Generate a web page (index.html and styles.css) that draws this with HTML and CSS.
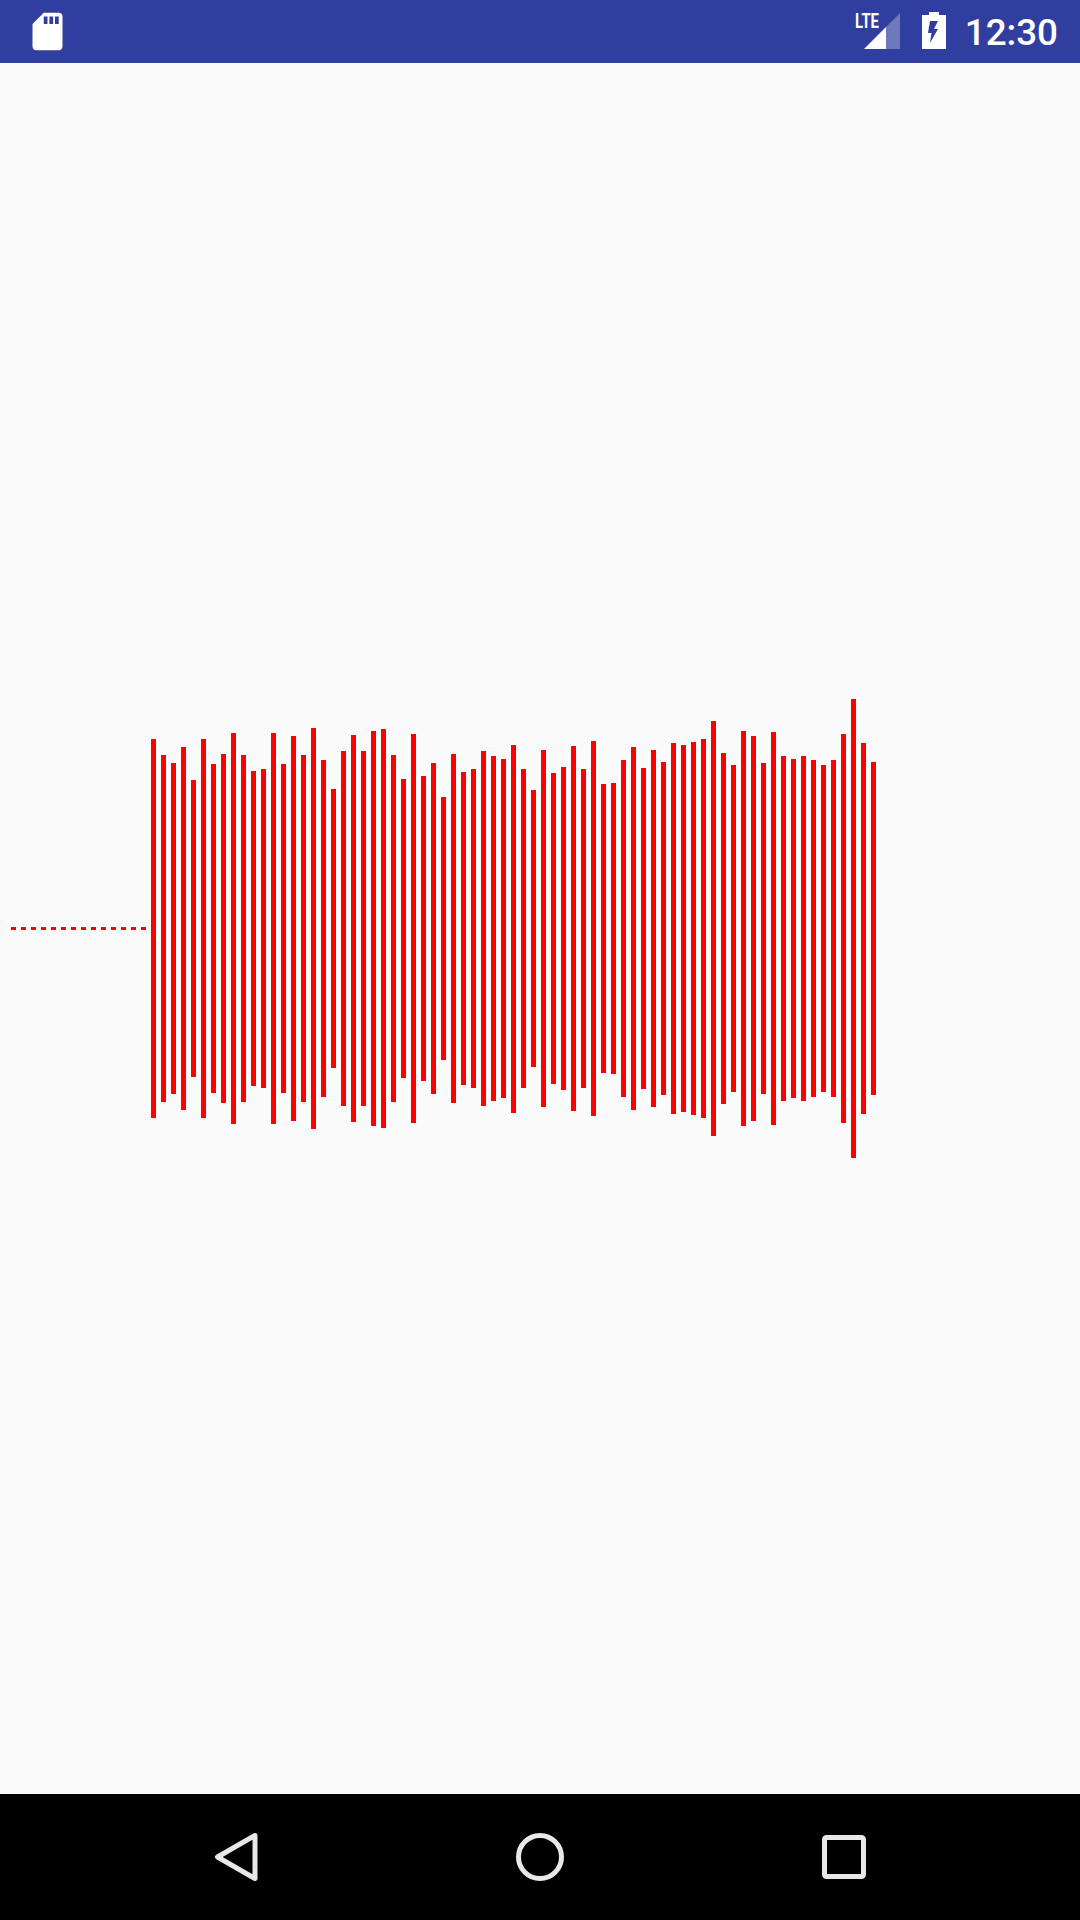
FILE: index.html
```html
<!DOCTYPE html>
<html>
<head>
    <title>Waveform</title>
    <link rel="stylesheet" href="styles.css">
</head>
<body>
    <div class="status-bar">
        <svg class="sd-icon" viewBox="0 0 24 24">
            <path d="M18 2h-8L4.02 8 4 20c0 1.1.9 2 2 2h12c1.1 0 2-.9 2-2V4c0-1.1-.9-2-2-2zm-6 6h-2V4h2v4zm3 0h-2V4h2v4zm3 0h-2V4h2v4z"/>
        </svg>
        <div class="status-right">
            <svg class="signal-icon" viewBox="0 0 46 45">
                <text class="lte-text" x="1" y="19" textLength="24" lengthAdjust="spacingAndGlyphs">LTE</text>
                <polygon class="signal-empty" points="32,18 46,4 46,40 32,40"/>
                <polygon class="signal-full" points="10,40 32,18 32,40"/>
            </svg>
            <svg class="battery-icon" viewBox="0 0 24 37">
                <path fill-rule="evenodd" d="M7 0h10v3h7v34H0V3h7z M8 9h8l-4 8h4L8 31l1.500-10H6z"/>
            </svg>
            <span class="clock">12:30</span>
        </div>
    </div>

    <div class="content">
        <div class="dash-line"></div>
        <div class="wave">
            <div class="bar" style="height:379px"></div>
            <div class="bar" style="height:347px"></div>
            <div class="bar" style="height:331px"></div>
            <div class="bar" style="height:363px"></div>
            <div class="bar" style="height:297px"></div>
            <div class="bar" style="height:379px"></div>
            <div class="bar" style="height:329px"></div>
            <div class="bar" style="height:349px"></div>
            <div class="bar" style="height:391px"></div>
            <div class="bar" style="height:347px"></div>
            <div class="bar" style="height:315px"></div>
            <div class="bar" style="height:319px"></div>
            <div class="bar" style="height:391px"></div>
            <div class="bar" style="height:329px"></div>
            <div class="bar" style="height:385px"></div>
            <div class="bar" style="height:347px"></div>
            <div class="bar" style="height:401px"></div>
            <div class="bar" style="height:337px"></div>
            <div class="bar" style="height:279px"></div>
            <div class="bar" style="height:355px"></div>
            <div class="bar" style="height:387px"></div>
            <div class="bar" style="height:355px"></div>
            <div class="bar" style="height:395px"></div>
            <div class="bar" style="height:399px"></div>
            <div class="bar" style="height:347px"></div>
            <div class="bar" style="height:299px"></div>
            <div class="bar" style="height:389px"></div>
            <div class="bar" style="height:305px"></div>
            <div class="bar" style="height:331px"></div>
            <div class="bar" style="height:263px"></div>
            <div class="bar" style="height:349px"></div>
            <div class="bar" style="height:313px"></div>
            <div class="bar" style="height:319px"></div>
            <div class="bar" style="height:355px"></div>
            <div class="bar" style="height:345px"></div>
            <div class="bar" style="height:339px"></div>
            <div class="bar" style="height:368px"></div>
            <div class="bar" style="height:319px"></div>
            <div class="bar" style="height:277px"></div>
            <div class="bar" style="height:357px"></div>
            <div class="bar" style="height:311px"></div>
            <div class="bar" style="height:323px"></div>
            <div class="bar" style="height:365px"></div>
            <div class="bar" style="height:319px"></div>
            <div class="bar" style="height:375px"></div>
            <div class="bar" style="height:289px"></div>
            <div class="bar" style="height:291px"></div>
            <div class="bar" style="height:337px"></div>
            <div class="bar" style="height:363px"></div>
            <div class="bar" style="height:321px"></div>
            <div class="bar" style="height:357px"></div>
            <div class="bar" style="height:333px"></div>
            <div class="bar" style="height:371px"></div>
            <div class="bar" style="height:367px"></div>
            <div class="bar" style="height:373px"></div>
            <div class="bar" style="height:379px"></div>
            <div class="bar" style="height:415px"></div>
            <div class="bar" style="height:351px"></div>
            <div class="bar" style="height:327px"></div>
            <div class="bar" style="height:395px"></div>
            <div class="bar" style="height:385px"></div>
            <div class="bar" style="height:331px"></div>
            <div class="bar" style="height:393px"></div>
            <div class="bar" style="height:345px"></div>
            <div class="bar" style="height:339px"></div>
            <div class="bar" style="height:345px"></div>
            <div class="bar" style="height:337px"></div>
            <div class="bar" style="height:327px"></div>
            <div class="bar" style="height:337px"></div>
            <div class="bar" style="height:389px"></div>
            <div class="bar" style="height:459px"></div>
            <div class="bar" style="height:371px"></div>
            <div class="bar" style="height:333px"></div>
        </div>
    </div>

    <div class="nav-bar">
        <div class="nav-button">
            <svg class="nav-icon" viewBox="0 0 48 56">
                <path d="M43 6.500 L5.500 28 L43 49.500 Z"/>
            </svg>
        </div>
        <div class="nav-button">
            <svg class="nav-icon" viewBox="0 0 48 56">
                <circle cx="24" cy="28" r="21.500"/>
            </svg>
        </div>
        <div class="nav-button">
            <svg class="nav-icon" viewBox="0 0 48 56">
                <rect x="4.500" y="8.500" width="39" height="39" rx="2"/>
            </svg>
        </div>
    </div>
</body>
</html>
```

FILE: styles.css
```css
body {
    margin: 0;
    width: 1080px;
    height: 1920px;
    display: flex;
    flex-direction: column;
    background-color: #fafafa;
    font-family: Roboto, sans-serif;
    overflow: hidden;
}

/* status bar */
.status-bar {
    height: 63px;
    flex-shrink: 0;
    display: flex;
    align-items: center;
    justify-content: space-between;
    padding: 0 22px 0 25px;
    background-color: #303f9f;
}
.sd-icon {
    width: 45px;
    height: 45px;
    fill: #fff;
}
.status-right {
    display: flex;
    align-items: center;
}
.signal-icon {
    width: 46px;
    height: 45px;
    margin-right: 22px;
}
.lte-text {
    font-family: Roboto, sans-serif;
    font-size: 20px;
    font-weight: 700;
    fill: #fff;
}
.signal-full {
    fill: #fff;
}
.signal-empty {
    fill: #fff;
    fill-opacity: 0.3;
}
.battery-icon {
    width: 24px;
    height: 37px;
    margin-right: 19px;
    margin-bottom: 2px;
    fill: #fff;
}
.clock {
    color: #fff;
    font-size: 36.75px;
    font-weight: 500;
    line-height: 63px;
    margin-top: 2px;
}

/* waveform */
.content {
    flex: 1;
    display: flex;
    align-items: center;
    padding-left: 11px;
}
.dash-line {
    width: 135px;
    height: 3px;
    margin-right: 5px;
    background-image: repeating-linear-gradient(to right, #f00 0, #f00 5px, transparent 5px, transparent 10px);
}
.wave {
    display: flex;
    align-items: center;
    gap: 5px;
}
.bar {
    width: 5px;
    background-color: #f00;
}

/* nav bar */
.nav-bar {
    height: 126px;
    flex-shrink: 0;
    display: flex;
    justify-content: center;
    align-items: center;
    background-color: #000;
}
.nav-button {
    width: 304px;
    display: flex;
    justify-content: center;
}
.nav-icon {
    width: 48px;
    height: 56px;
    fill: none;
    stroke: #e8e8e8;
    stroke-width: 5;
    stroke-linejoin: round;
}
```
